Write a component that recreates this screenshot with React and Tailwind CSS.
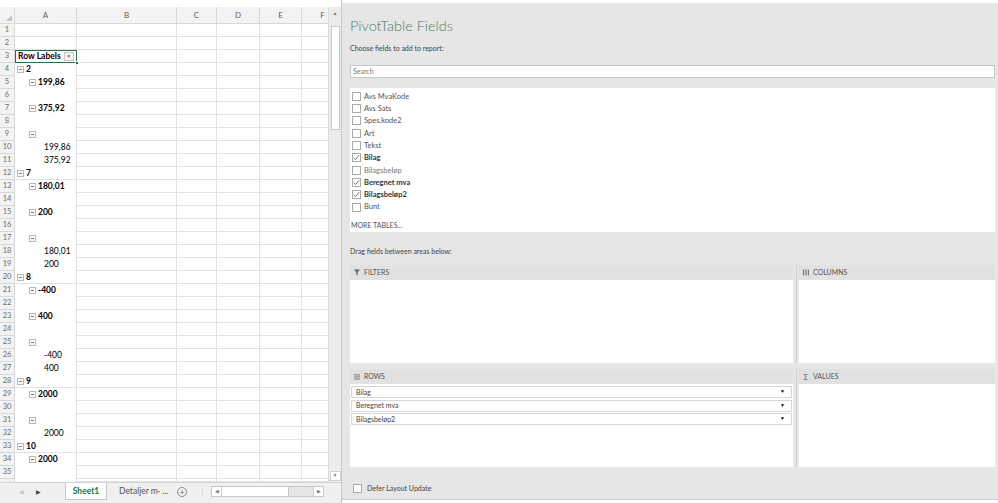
import React from 'react';

// pivot rows shown in column A: [level, hasToggle, text]
const rows = [
  [0, false, ''],
  [0, false, ''],
  ['header'],
  [1, true, '2'],
  [2, true, '199,86'],
  [0, false, ''],
  [2, true, '375,92'],
  [0, false, ''],
  [2, true, ''],
  [3, false, '199,86'],
  [3, false, '375,92'],
  [1, true, '7', 'sep'],
  [2, true, '180,01'],
  [0, false, ''],
  [2, true, '200'],
  [0, false, ''],
  [2, true, ''],
  [3, false, '180,01'],
  [3, false, '200'],
  [1, true, '8', 'sep'],
  [2, true, '-400'],
  [0, false, ''],
  [2, true, '400'],
  [0, false, ''],
  [2, true, ''],
  [3, false, '-400'],
  [3, false, '400'],
  [1, true, '9', 'sep'],
  [2, true, '2000'],
  [0, false, ''],
  [2, true, ''],
  [3, false, '2000'],
  [1, true, '10', 'sep'],
  [2, true, '2000'],
  [0, false, ''],
];

const fields = [
  ['Avs MvaKode', false],
  ['Avs Sats', false],
  ['Spes.kode2', false],
  ['Art', false],
  ['Tekst', false],
  ['Bilag', true],
  ['Bilagsbeløp', false],
  ['Beregnet mva', true],
  ['Bilagsbeløp2', true],
  ['Bunt', false],
];

function Toggle() {
  return (
    <span className="inline-flex w-[7px] h-[7px] shrink-0 items-center justify-center border border-[#b8b8b8] bg-white mr-[2px]">
      <span className="w-[3px] h-px bg-[#777]" />
    </span>
  );
}

function GridCells() {
  return (
    <>
      <div className="w-[100px] shrink-0 border-r border-b border-[#e2e2e2]" />
      <div className="w-[40px] shrink-0 border-r border-b border-[#e2e2e2]" />
      <div className="w-[43px] shrink-0 border-r border-b border-[#e2e2e2]" />
      <div className="w-[42px] shrink-0 border-r border-b border-[#e2e2e2]" />
      <div className="w-[42px] shrink-0 border-r border-b border-[#e2e2e2]" />
    </>
  );
}

function RowNum({ n }) {
  return (
    <div className="w-[15px] shrink-0 flex items-center justify-center bg-[#f3f3f3] border-r border-b border-[#d8d8d8] text-[7.5px] text-[#6d6d6d]">
      {n}
    </div>
  );
}

function CellA({ row, n }) {
  if (row[0] === 'header') {
    return (
      <div className="relative w-[62px] shrink-0 flex items-center border border-[#217346] bg-white pl-[2px] text-[8.5px] font-bold text-black">
        <span>Row Labels</span>
        <span className="ml-[3px] w-[10px] h-[9px] flex items-center justify-center border border-[#c8c8c8] bg-[#f4f4f4] text-[5px] text-[#777]">▼</span>
        <span className="absolute right-[-3px] bottom-[-3px] w-[4px] h-[4px] bg-[#217346] border border-white" />
      </div>
    );
  }
  const [lvl, toggle, text, sep] = row;
  const grid = n <= 2;
  const pad = lvl === 1 ? 'pl-[2px]' : lvl === 2 ? 'pl-[14px]' : lvl === 3 ? 'pl-[29px]' : '';
  const border = grid
    ? 'border-b border-[#e2e2e2]'
    : sep
    ? 'border-b border-[#dde4ee]'
    : '';
  return (
    <div className={`w-[62px] shrink-0 flex items-center border-r border-r-[#e2e2e2] text-[8.5px] text-black ${pad} ${border}`}>
      {toggle && <Toggle />}
      <span className={lvl === 3 ? '' : 'font-bold'}>{text}</span>
    </div>
  );
}

function Sheet() {
  return (
    <div className="w-[342px] shrink-0 flex flex-col border-r border-[#c6c6c6] bg-white">
      <div className="h-[7px] bg-white" />
      <div className="flex h-[475px]">
        <div className="w-[328px] overflow-hidden flex flex-col">
          {/* column headers */}
          <div className="flex h-[17px] shrink-0 bg-[#f3f3f3] text-[8px] text-[#5f5f5f]">
            <div className="w-[15px] shrink-0 border-r border-b border-[#d8d8d8] flex items-end justify-end p-[2px]">
              <span className="w-0 h-0 border-l-[6px] border-l-transparent border-b-[6px] border-b-[#c4c4c4]" />
            </div>
            <div className="w-[62px] shrink-0 flex items-center justify-center border-r border-b border-[#d8d8d8]">A</div>
            <div className="w-[100px] shrink-0 flex items-center justify-center border-r border-b border-[#d8d8d8]">B</div>
            <div className="w-[40px] shrink-0 flex items-center justify-center border-r border-b border-[#d8d8d8]">C</div>
            <div className="w-[43px] shrink-0 flex items-center justify-center border-r border-b border-[#d8d8d8]">D</div>
            <div className="w-[42px] shrink-0 flex items-center justify-center border-r border-b border-[#d8d8d8]">E</div>
            <div className="w-[42px] shrink-0 flex items-center justify-center border-r border-b border-[#d8d8d8]">F</div>
          </div>
          {rows.map((row, i) => (
            <div key={i} className="flex h-[13px] shrink-0">
              <RowNum n={i + 1} />
              <CellA row={row} n={i + 1} />
              <GridCells />
            </div>
          ))}
          <div className="flex h-[3px] shrink-0 overflow-hidden">
            <div className="w-[15px] shrink-0 bg-[#f3f3f3] border-r border-[#d8d8d8]" />
            <div className="w-[62px] shrink-0 border-r border-[#e2e2e2]" />
            <GridCells />
          </div>
        </div>
        {/* vertical scrollbar */}
        <div className="w-[13px] shrink-0 flex flex-col items-center bg-[#ececec] border-l border-[#dadada]">
          <div className="h-[12px] mt-[1px] flex items-center text-[5px] text-[#777]">▲</div>
          <div className="w-[9px] h-[104px] mt-[6px] bg-white border border-[#c9c9c9]" />
          <div className="flex-1" />
          <div className="h-[10px] mb-[1px] w-[11px] flex items-center justify-center bg-white border border-[#d0d0d0] text-[5px] text-[#777]">▼</div>
        </div>
      </div>
      {/* sheet tabs */}
      <div className="h-[21px] flex items-start bg-[#f0f0f0] border-t border-[#d5d5d5] text-[8.5px]">
        <div className="w-[65px] h-[17px] flex items-center pl-[19px] gap-[12px] text-[6px]">
          <span className="text-[#c2c2c2]">◀</span>
          <span className="text-[#444]">▶</span>
        </div>
        <div className="w-[42px] h-[17px] flex items-center justify-center bg-white border-b border-x border-[#c6c6c6] font-bold text-[#217346]">
          Sheet1
        </div>
        <div className="ml-[12px] h-[17px] flex items-center text-[#555]">Detaljer m· ...</div>
        <div className="ml-[9px] h-[17px] flex items-center">
          <span className="w-[10px] h-[10px] rounded-full border border-[#8a8a8a] flex items-center justify-center text-[8px] leading-none text-[#666]">+</span>
        </div>
        <div className="ml-[12px] h-[17px] flex items-center text-[#aaa] text-[7px]">⋮</div>
        <div className="ml-[5px] mt-[3px] w-[113px] h-[11px] flex items-center bg-[#e6e6e6] border border-[#c9c9c9]">
          <span className="w-[10px] h-full flex items-center justify-center bg-white text-[5px] text-[#777] border-r border-[#d0d0d0]">◀</span>
          <span className="w-[67px] h-full bg-white border-r border-[#c9c9c9]" />
          <span className="flex-1" />
          <span className="w-[10px] h-full flex items-center justify-center bg-white text-[5px] text-[#777] border-l border-[#d0d0d0]">▶</span>
        </div>
      </div>
    </div>
  );
}

function Check({ on }) {
  return (
    <span className="w-[9px] h-[9px] shrink-0 border border-[#a9a9a9] bg-white flex items-center justify-center">
      {on && (
        <svg width="7" height="7" viewBox="0 0 8 8">
          <polyline points="1,4.2 3,6.4 7,1.2" fill="none" stroke="#555" strokeWidth="0.9" />
        </svg>
      )}
    </span>
  );
}

function AreaHeader({ icon, label }) {
  return (
    <div className="h-[15px] flex items-center gap-[4px] pl-[4px] bg-[#e1e1e1] text-[7px] text-[#555]">
      <span className="w-[6px] flex justify-center">{icon}</span>
      <span>{label}</span>
    </div>
  );
}

function RowItem({ label }) {
  return (
    <div className="h-[12px] mx-[1px] mb-[1.5px] flex items-center justify-between pl-[4px] pr-[6px] bg-white border border-[#d6d6d6] text-[7px] text-[#444]">
      <span>{label}</span>
      <span className="text-[5px] text-black">▼</span>
    </div>
  );
}

function Pivot() {
  return (
    <div className="flex-1 bg-white pt-[3px]">
      <div className="h-[497px] bg-[#e6e6e6] border-b border-[#cfcfcf] pl-[8px] pr-[3px] flex flex-col">
        <div className="mt-[15px] leading-[16px] text-[14.5px] font-light text-[#4e7d5d]">PivotTable Fields</div>
        <div className="mt-[9px] leading-[10px] text-[7px] text-[#444]">Choose fields to add to report:</div>
        <div className="mt-[12px] h-[13px] flex items-center pl-[2px] bg-white border border-[#c6c6c6] text-[7px] text-[#777]">Search</div>
        <div className="mt-[10px] h-[144px] bg-white pt-[2px]">
          {fields.map(([name, on]) => (
            <div key={name} className="h-[12.33px] flex items-center gap-[3px] pl-[2px]">
              <Check on={on} />
              <span className={`text-[7.5px] ${on ? 'font-bold text-[#333]' : name === 'Bilagsbeløp' ? 'text-[#777]' : 'text-[#555]'}`}>{name}</span>
            </div>
          ))}
          <div className="mt-[6px] h-[12px] flex items-center pl-[1px] text-[7px] text-[#555]">MORE TABLES...</div>
        </div>
        <div className="mt-[14px] leading-[10px] text-[7px] text-[#444]">Drag fields between areas below:</div>
        <div className="mt-[9px] grid grid-cols-[443px_1fr] gap-x-[6px] gap-y-[6px]">
          <div className="flex flex-col">
            <AreaHeader
              label="FILTERS"
              icon={
                <svg width="6" height="7" viewBox="0 0 6 7">
                  <path d="M0 0.5H6L3.7 3.3V6.5L2.3 5.8V3.3Z" fill="#666" />
                </svg>
              }
            />
            <div className="h-[83px] bg-white" />
          </div>
          <div className="flex flex-col border-l border-[#cfcfcf] -ml-[3px] pl-[2px]">
            <AreaHeader
              label="COLUMNS"
              icon={
                <svg width="6" height="7" viewBox="0 0 6 7">
                  <rect x="0" y="0.5" width="1.2" height="6" fill="#777" />
                  <rect x="2.4" y="0.5" width="1.2" height="6" fill="#777" />
                  <rect x="4.8" y="0.5" width="1.2" height="6" fill="#777" />
                </svg>
              }
            />
            <div className="h-[83px] bg-white" />
          </div>
          <div className="flex flex-col">
            <AreaHeader
              label="ROWS"
              icon={
                <svg width="7" height="6" viewBox="0 0 7 6">
                  <rect x="0" y="0" width="7" height="1.1" fill="#777" />
                  <rect x="0" y="2.4" width="7" height="1.1" fill="#777" />
                  <rect x="0" y="4.8" width="7" height="1.1" fill="#777" />
                </svg>
              }
            />
            <div className="h-[83px] bg-white pt-[2px]">
              <RowItem label="Bilag" />
              <RowItem label="Beregnet mva" />
              <RowItem label="Bilagsbeløp2" />
            </div>
          </div>
          <div className="flex flex-col border-l border-[#cfcfcf] -ml-[3px] pl-[2px]">
            <AreaHeader label="VALUES" icon={<span className="text-[8px] leading-none text-[#666]">Σ</span>} />
            <div className="h-[83px] bg-white" />
          </div>
        </div>
        <div className="mt-[16px] flex items-center gap-[5px] pl-[3px]">
          <Check on={false} />
          <span className="text-[7px] text-[#444]">Defer Layout Update</span>
        </div>
      </div>
    </div>
  );
}

export default function App() {
  return (
    <div className="flex w-[998px] h-[503px] overflow-hidden bg-white font-['Lato',sans-serif]">
      <Sheet />
      <Pivot />
    </div>
  );
}
